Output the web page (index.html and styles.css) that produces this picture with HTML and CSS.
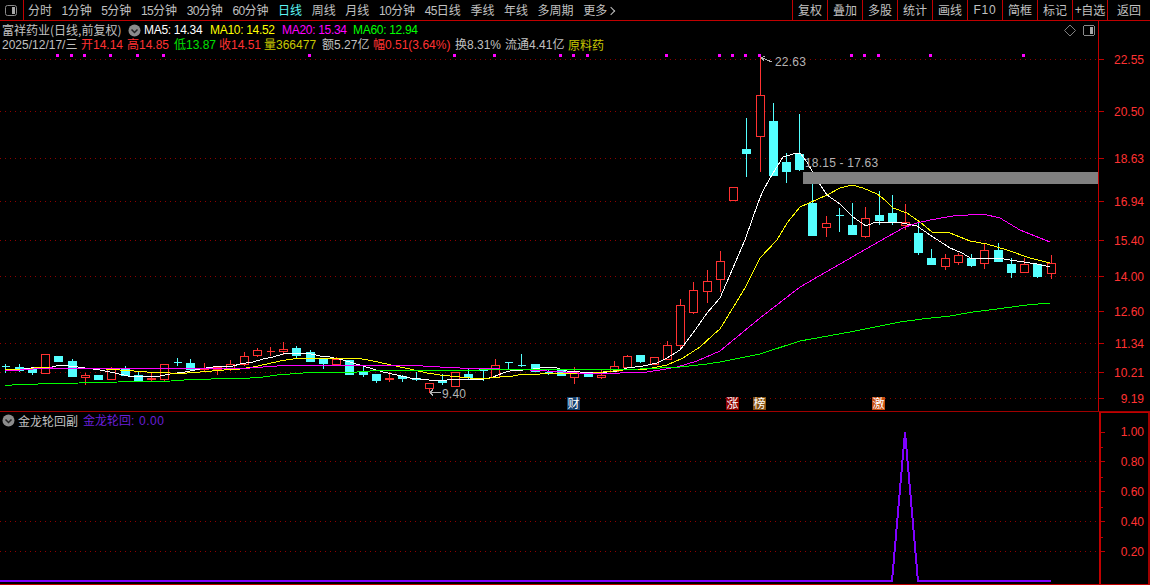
FILE: index.html
```html
<!DOCTYPE html>
<html lang="zh">
<head>
<meta charset="utf-8">
<title>富祥药业</title>
<link rel="stylesheet" href="styles.css">
</head>
<body>
<div class="app">
  <nav class="toolbar">
    <div class="tool-icon">
      <svg class="layout-icon" width="12" height="11" viewBox="0 0 12 11"><rect x="0.5" y="0.5" width="11" height="10" rx="2" class="li-box"/><rect x="7" y="2" width="3" height="7" class="li-fill"/></svg>
    </div>
    <div class="periods">
      <span>分时</span><span><b>1</b>分钟</span><span><b>5</b>分钟</span><span><b>15</b>分钟</span><span><b>30</b>分钟</span><span><b>60</b>分钟</span><span class="active">日线</span><span>周线</span><span>月线</span><span><b>10</b>分钟</span><span><b>45</b>日线</span><span>季线</span><span>年线</span><span>多周期</span><span>更多<i class="more"></i></span>
    </div>
    <div class="actions">
      <span>复权</span><span>叠加</span><span>多股</span><span>统计</span><span>画线</span><span><b class="wide">F10</b></span><span>简框</span><span>标记</span><span><b>+</b>自选</span><span class="back">返回</span>
    </div>
  </nav>

  <section class="pane main-pane">
    <div class="pane-head">
      <div class="head-line quotes">
        <span class="stock">富祥药业(日线,前复权)</span>
        <svg class="chev" width="13" height="13" viewBox="0 0 13 13"><circle cx="6.5" cy="6.5" r="6" class="chev-c"/><path d="M3.5 5.5l3 3 3-3" class="chev-p"/></svg>
        <span class="ma w">MA5: 14.34</span>
        <span class="ma y">MA10: 14.52</span>
        <span class="ma m">MA20: 15.34</span>
        <span class="ma g">MA60: 12.94</span>
      </div>
      <div class="head-line data">
        <span class="gr"><b>2025/12/17/</b>三</span>
        <span class="r">开<b>14.14</b></span>
        <span class="r">高<b>14.85</b></span>
        <span class="g2">低<b>13.87</b></span>
        <span class="r">收<b>14.51</b></span>
        <span class="y2">量<b>366477</b></span>
        <span class="gr">额<b>5.27</b>亿</span>
        <span class="r">幅<b>0.51(3.64%)</b></span>
        <span class="gr">换<b>8.31%</b></span>
        <span class="gr">流通<b>4.41</b>亿</span>
        <span class="y2">原料药</span>
      </div>
    </div>
    <svg class="chart" width="1098" height="390" viewBox="0 21 1098 390" shape-rendering="crispEdges">
      <path class="grid" d="M0 59.5H1098M0 111.5H1098M0 158.5H1098M0 201.5H1098M0 240.5H1098M0 276.5H1098M0 311.5H1098M0 343.5H1098M0 372.5H1098M0 398.5H1098"/>
      <path class="signal" d="M56 54h3v3h-3zM70 54h3v3h-3zM83 54h3v3h-3zM109 54h3v3h-3zM136 54h3v3h-3zM162 54h3v3h-3zM308 54h3v3h-3zM453 54h3v3h-3zM493 54h3v3h-3zM559 54h3v3h-3zM572 54h3v3h-3zM586 54h3v3h-3zM665 54h3v3h-3zM718 54h3v3h-3zM731 54h3v3h-3zM744 54h3v3h-3zM758 54h3v3h-3zM850 54h3v3h-3zM863 54h3v3h-3zM877 54h3v3h-3zM929 54h3v3h-3zM1022 54h3v3h-3z"/>
      <path class="cyan" d="M5.5 364V373M1.5 366.5h8M19.5 364V372M15.5 367.5h8v3h-8zM32.5 369V375M28.5 369.5h8v3h-8zM58.5 356V362M54.5 356.5h8v5h-8zM72.5 359V376M68.5 361.5h8v15h-8zM94.5 375.5h8v4h-8zM125.5 366V375M121.5 368.5h8v7h-8zM138.5 372V382M134.5 375.5h8v5h-8zM177.5 358V366M173.5 362.5h8M190.5 359V370M186.5 363.5h8v6h-8zM296.5 346V358M292.5 348.5h8v7h-8zM310.5 350V362M306.5 352.5h8v9h-8zM323.5 359V369M319.5 359.5h8v4h-8zM349.5 360V374M345.5 360.5h8v14h-8zM363.5 365V377M359.5 372.5h8v2h-8zM376.5 374V383M372.5 374.5h8v6h-8zM402.5 375V382M398.5 376.5h8v2h-8zM416.5 372V381M412.5 378.5h8v1h-8zM442.5 374V385M438.5 381.5h8v1h-8zM468.5 369V379M464.5 374.5h8v3h-8zM483.5 369V381M479.5 369.5h8v1h-8zM508.5 362V369M504.5 362.5h8M521.5 354V367M517.5 365.5h8M535.5 364V372M531.5 364.5h8v7h-8zM548.5 369V375M544.5 372.5h8M561.5 370V375M557.5 370.5h8v5h-8zM588.5 372V376M584.5 372.5h8v4h-8zM640.5 355V363M636.5 355.5h8v6h-8zM746.5 118V177M742.5 149.5h8v4h-8zM773.5 103V175M769.5 121.5h8v54h-8zM786.5 153V183M782.5 162.5h8v9h-8zM799.5 114V171M795.5 154.5h8v15h-8zM812.5 183V236M808.5 203.5h8v32h-8zM839.5 208V232M835.5 215.5h8M852.5 203V235M848.5 225.5h8v9h-8zM879.5 191V225M875.5 215.5h8v5h-8zM892.5 195V225M888.5 213.5h8v9h-8zM918.5 220V255M914.5 233.5h8v19h-8zM931.5 249V264M927.5 258.5h8v6h-8zM971.5 254V267M967.5 258.5h8v7h-8zM998.5 243V262M994.5 250.5h8v11h-8zM1011.5 258V278M1007.5 264.5h8v8h-8zM1037.5 264V278M1033.5 264.5h8v12h-8z"/>
      <path class="wick" d="M85.5 373V385M111.5 367V380M151.5 373V382M164.5 364V382M204.5 363V371M217.5 367V375M230.5 360V371M244.5 352V366M257.5 348V357M270.5 347V356M283.5 342V355M336.5 357V364M389.5 372V382M429.5 383V393M495.5 359V377M574.5 367V384M601.5 370V379M614.5 361V371M627.5 355V367M667.5 341V359M680.5 299V349M693.5 282V314M707.5 270V303M720.5 251V292M760.5 57V172M826.5 216V237M865.5 207V238M905.5 204V230M945.5 254V270M958.5 253V265M984.5 244V269M1024.5 258V272M1051.5 255V279"/>
      <path class="body" d="M41.5 354.5h8v19h-8zM81.5 375.5h8v2h-8zM107.5 368.5h8v11h-8zM147.5 378.5h8v1h-8zM160.5 364.5h8v15h-8zM200.5 368.5h8v1h-8zM213.5 367.5h8v2h-8zM226.5 364.5h8v5h-8zM240.5 356.5h8v8h-8zM253.5 350.5h8v5h-8zM266.5 351.5h8M279.5 349.5h8v2h-8zM332.5 359.5h8v5h-8zM385.5 378.5h8v1h-8zM425.5 383.5h8v5h-8zM451.5 372.5h8v14h-8zM491.5 365.5h8v12h-8zM570.5 372.5h8v5h-8zM597.5 375.5h8v2h-8zM610.5 366.5h8v5h-8zM623.5 356.5h8v11h-8zM650.5 357.5h8v7h-8zM663.5 345.5h8v14h-8zM676.5 305.5h8v40h-8zM689.5 290.5h8v22h-8zM703.5 281.5h8v10h-8zM716.5 261.5h8v18h-8zM729.5 187.5h8v13h-8zM756.5 95.5h8v41h-8zM822.5 223.5h8v4h-8zM861.5 218.5h8v18h-8zM901.5 222.5h8v3h-8zM941.5 258.5h8v8h-8zM954.5 255.5h8v7h-8zM980.5 250.5h8v13h-8zM1020.5 264.5h8v8h-8zM1047.5 263.5h8v10h-8z"/>
      <polyline class="line l-white" points="5,370 18,370 37,367 52,367 60,365 78,367 100,370 115,373 128,376 160,376 170,374 185,372 200,369 213,367 233,366 240,364 253,362 263,359 273,357 283,354 293,353 307,353 320,356 330,357 343,360 353,363 363,366 373,369 383,372 397,375 410,378 420,379 437,381 447,380 457,379 473,379 480,380 493,377 503,373 513,370 523,370 533,369 547,367 557,368 567,371 580,372 593,373 607,372 617,371 627,368 643,366 657,363 667,358 680,350 693,333 707,313 720,298 745,240 758,203 762,193 770,178 783,157 793,154 800,153 807,162 817,180 827,195 840,204 853,217 866,226 873,223 897,222 917,226 930,235 950,248 962,253 972,259 997,258 1017,261 1037,264 1050,267"/>
      <polyline class="line l-yellow" points="5,369 30,369 38,367 53,368 92,368 120,370 147,372 170,373 187,373 200,372 224,370 240,369 253,367 267,364 280,361 293,359 317,358 337,358 357,358 373,361 387,364 400,367 410,369 427,373 440,375 460,377 480,379 500,377 513,376 523,374 540,374 553,373 573,373 593,373 613,371 623,370 647,369 667,365 683,358 700,347 713,335 720,329 745,288 760,258 777,240 787,223 800,207 827,195 840,188 852,185 863,188 877,194 885,200 893,208 907,213 920,222 932,232 950,233 970,241 987,244 1007,250 1030,258 1050,263"/>
      <polyline class="line l-magenta" points="5,371 20,370 33,369 50,368 240,369 250,368 263,367 277,366 290,365 340,365 367,365 423,366 440,367 460,368 480,368 500,369 530,370 563,372 590,374 620,373 647,372 660,370 677,367 697,361 720,351 760,318 800,287 840,264 873,245 903,228 917,223 930,220 953,216 983,214 1000,218 1020,230 1040,238 1050,242"/>
      <polyline class="line l-green" points="5,386 12,385 38,384 79,383 118,382 171,381 184,380 211,379 240,378 250,378 263,377 277,375 290,374 303,373 330,372 357,372 383,370 480,370 640,369 680,367 707,364 720,362 760,354 800,341 850,332 900,322 922,319 950,316 973,312 997,309 1027,305 1050,303"/>
      <rect class="zone" x="803" y="172" width="295" height="12"/>
      <path class="arrow" d="M772 62L761 57.5M761 57.5l4 -1M761 57.5l3 3M441 392.5H430M430 392.5l3 -3M430 392.5l3 3"/>
      <text class="note" x="775" y="66">22.63</text>
      <text class="note" x="805" y="167">18.15 - 17.63</text>
      <text class="note" x="442" y="398">9.40</text>
      <rect class="tag t-blue" x="567" y="397" width="13" height="13"/><text class="tag-t" x="567.5" y="408">财</text>
      <rect class="tag t-red" x="726" y="397" width="13" height="13"/><text class="tag-t" x="726.5" y="408">涨</text>
      <rect class="tag t-brown" x="753" y="397" width="13" height="13"/><text class="tag-t" x="753.5" y="408">榜</text>
      <rect class="tag t-orange" x="872" y="397" width="13" height="13"/><text class="tag-t" x="872.5" y="408">激</text>
      <path class="diamond" shape-rendering="auto" d="M1070 25l5.500 5.500-5.500 5.500-5.500-5.500z"/>
      <rect class="li-box" x="1083.5" y="25.5" width="11" height="10" rx="2"/>
      <rect class="li-fill" x="1090" y="27" width="3" height="7"/>
    </svg>
    <svg class="axis" width="52" height="390" viewBox="1099 21 51 390">
      <path class="tick" shape-rendering="crispEdges" d="M1099 59.5h5M1099 111.5h5M1099 158.5h5M1099 201.5h5M1099 240.5h5M1099 276.5h5M1099 311.5h5M1099 343.5h5M1099 372.5h5M1099 398.5h5"/>
      <text class="price" x="1144" y="64">22.55</text>
      <text class="price" x="1144" y="116">20.50</text>
      <text class="price" x="1144" y="163">18.63</text>
      <text class="price" x="1144" y="206">16.94</text>
      <text class="price" x="1144" y="245">15.40</text>
      <text class="price" x="1144" y="281">14.00</text>
      <text class="price" x="1144" y="316">12.60</text>
      <text class="price" x="1144" y="348">11.34</text>
      <text class="price" x="1144" y="377">10.21</text>
      <text class="price" x="1144" y="403">9.19</text>
    </svg>
  </section>

  <section class="pane sub-pane">
    <div class="pane-head sub-head">
      <div class="head-line sub-line">
        <svg class="chev" width="13" height="13" viewBox="0 0 13 13"><circle cx="6.5" cy="6.5" r="6" class="chev-c"/><path d="M3.5 5.5l3 3 3-3" class="chev-p"/></svg>
        <span class="stock">金龙轮回副</span>
        <span class="purple">金龙轮回<b>: 0.00</b></span>
      </div>
    </div>
    <svg class="chart" width="1099" height="172" viewBox="0 412 1099 172" shape-rendering="crispEdges">
      <path class="grid" d="M0 461.5H1098M0 491.5H1098M0 521.5H1098M0 551.5H1098"/>
      <polyline class="spike" points="0,581 892,581 905,432 918,581 1051,581"/>
    </svg>
    <svg class="axis sub-axis" width="51" height="172" viewBox="1101 413 47 171">
      <path class="tick" shape-rendering="crispEdges" d="M1101 432.5h4M1101 461.5h4M1101 491.5h4M1101 521.5h4M1101 551.5h4M1101 447.5h2M1101 477.5h2M1101 507.5h2M1101 537.5h2"/>
      <text class="price" x="1144" y="436">1.00</text>
      <text class="price" x="1144" y="466">0.80</text>
      <text class="price" x="1144" y="496">0.60</text>
      <text class="price" x="1144" y="526">0.40</text>
      <text class="price" x="1144" y="556">0.20</text>
    </svg>
  </section>
</div>
</body>
</html>
```
FILE: styles.css
```css
* { box-sizing: border-box; }
html, body { margin: 0; padding: 0; background: #000; }
body { font: 12px/14px "Noto Sans CJK SC", "Liberation Sans", sans-serif; color: #c0c0c0; }
b { font: 12px/14px "Liberation Sans", "Noto Sans CJK SC", sans-serif; letter-spacing: -0.62px; }
.app { width: 1150px; height: 585px; display: flex; flex-direction: column; overflow: hidden; background: #000; }

.toolbar { height: 21px; flex: none; display: flex; align-items: stretch; border-bottom: 1px solid #c00000; }
.tool-icon { width: 24px; display: flex; align-items: center; padding-left: 5px; border-right: 1px solid #c00000; }
.layout-icon { display: block; }
.li-box { fill: none; stroke: #8a8a8a; }
.li-fill { fill: #a8a8a8; }
.periods { display: flex; align-items: center; gap: 9.6px; padding-left: 4px; }
.periods span { white-space: nowrap; }
.periods .active { color: #5cf5f5; }
.more { display: inline-block; width: 6px; height: 6px; margin: 0 0 1px 1px; border-top: 1px solid #c0c0c0; border-right: 1px solid #c0c0c0; transform: rotate(45deg); }
.actions { margin-left: auto; display: flex; }
.actions span { width: 35px; display: flex; align-items: center; justify-content: center; border-left: 1px solid #c00000; white-space: nowrap; }
.actions .back { width: 43px; }
.actions .wide { letter-spacing: 0.8px; }

.pane { position: relative; display: flex; flex: none; }
.main-pane { height: 391px; border-bottom: 1px solid #a00000; }
.sub-pane { height: 173px; border-bottom: 1px solid #c00000; }
.chart { display: block; flex: none; }
.axis { display: block; flex: none; border-left: 1px solid #c00000; }
.sub-axis { border-left-width: 2px; border-top: 1px solid #c00000; border-right: 2px solid #a00000; }

.pane-head { position: absolute; left: 2px; top: 2px; z-index: 1; white-space: nowrap; }
.head-line { height: 14px; display: grid; align-items: center; }
.quotes { grid-template-columns: 126px 16px 66px 72px 71px auto; }
.data { grid-template-columns: 79px 46px 47px 45px 45px 58px 51px 82px 50px 63px auto; }
.data b { letter-spacing: 0; }
.sub-line { grid-template-columns: 16px 65px auto; }
.chev { display: block; }
.chev-c { fill: #8c8c8c; }
.chev-p { fill: none; stroke: #222; stroke-width: 1.5; }
.ma { font-family: "Liberation Sans", sans-serif; letter-spacing: -0.3px; }
.w { color: #fff; }
.y { color: #ffff00; }
.m { color: #ff00ff; }
.g { color: #00ff00; }
.gr { color: #c0c0c0; }
.r { color: #ff3232; }
.g2 { color: #00e000; }
.y2 { color: #c8c800; }
.sub-head { top: 1px; left: 2px; }
.purple { color: #6a1fd8; }
.purple b { letter-spacing: 0.6px; }

.grid { fill: none; stroke: #900000; stroke-dasharray: 1 4; }
.signal { fill: #ff00ff; }
.cyan { fill: #54ffff; stroke: #54ffff; }
.wick { fill: none; stroke: #ff3232; }
.body { fill: #000; stroke: #ff3232; }
.line { fill: none; stroke-width: 1; }
.l-white { stroke: #fff; }
.l-yellow { stroke: #ffff00; }
.l-magenta { stroke: #ff00ff; }
.l-green { stroke: #00ff00; }
.zone { fill: #808080; }
.arrow { fill: none; stroke: #b4b4b4; }
.note { fill: #b4b4b4; font: 12px "Liberation Sans", sans-serif; letter-spacing: 0.2px; }
.t-blue { fill: #14406c; }
.t-red { fill: #8b0000; }
.t-brown { fill: #85500f; }
.t-orange { fill: #c84e10; }
.tag-t { fill: #fff; font: 12px "Noto Sans CJK SC", sans-serif; }
.diamond { fill: none; stroke: #808080; }
.tick { fill: none; stroke: #c00000; }
.price { fill: #ff3232; font: 12px "Liberation Sans", sans-serif; text-anchor: end; }
.spike { fill: none; stroke: #7f00ff; stroke-width: 2; }
```
